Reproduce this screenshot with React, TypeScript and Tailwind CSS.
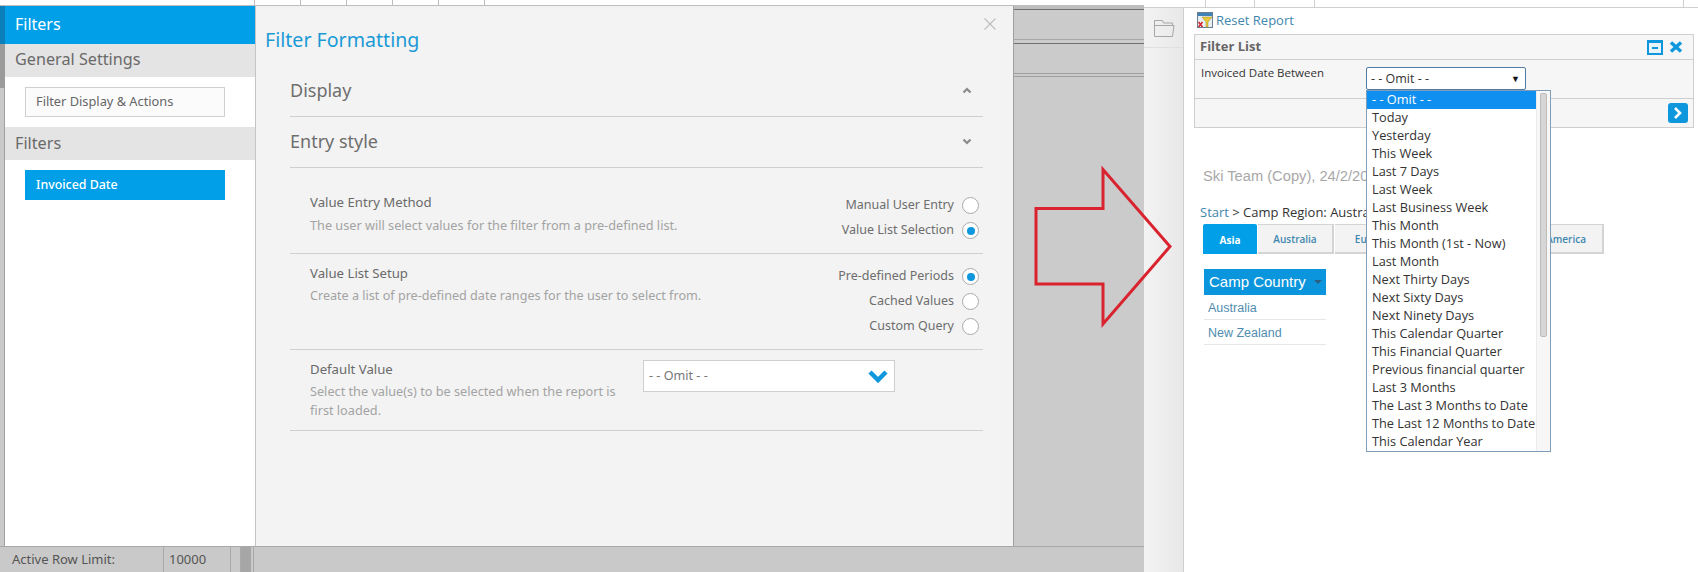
const ticksLeft = [138, 46, 46, 46, 46, 46]

const periods = [
  '- - Omit - -',
  'Today',
  'Yesterday',
  'This Week',
  'Last 7 Days',
  'Last Week',
  'Last Business Week',
  'This Month',
  'This Month (1st - Now)',
  'Last Month',
  'Next Thirty Days',
  'Next Sixty Days',
  'Next Ninety Days',
  'This Calendar Quarter',
  'This Financial Quarter',
  'Previous financial quarter',
  'Last 3 Months',
  'The Last 3 Months to Date',
  'The Last 12 Months to Date',
  'This Calendar Year',
]

function Radio({ label, checked = false }: { label: string; checked?: boolean }) {
  return (
    <div className="flex h-[25px] items-center justify-end gap-[8px]">
      <span className="text-[12.5px] text-[#6d6d6d]">{label}</span>
      <span className="flex h-[17px] w-[17px] items-center justify-center rounded-full border border-[#a9a9a9] bg-white">
        {checked && <span className="h-2 w-2 rounded-full bg-[#0e97dc]" />}
      </span>
    </div>
  )
}

function Chevron({ up = false }: { up?: boolean }) {
  return (
    <svg width="10" height="7" viewBox="0 0 10 7" className="text-[#8a8a8a]">
      <path d={up ? 'M1.5 5.5 5 2l3.5 3.5' : 'M1.5 1.5 5 5l3.5-3.5'} fill="none" stroke="currentColor" strokeWidth="2.2" />
    </svg>
  )
}

function Sidebar() {
  return (
    <div className="flex w-[255px] shrink-0">
      <div className="flex w-[5px] shrink-0 flex-col">
        <div className="h-[38px] bg-[#0b7fb9]" />
        <div className="h-[44px] bg-[#9b9b9b]" />
        <div className="flex-1 border-r border-[#a0a0a0] bg-[#c9c9c9]" />
      </div>
      <div className="flex-1 bg-white">
        <div className="flex h-[38px] items-center bg-[#009fe8] pb-[2px] pl-[10px] text-base text-white">Filters</div>
        <div className="flex h-[33px] items-center bg-[#e4e4e4] pb-[2px] pl-[10px] text-[16.2px] text-[#6a6a6a]">General Settings</div>
        <div className="px-[20px] py-[10px]">
          <div className="flex h-[30px] w-[200px] items-center border border-[#cfcfcf] bg-[#fbfbfb] pl-[10px] text-[12.8px] text-[#666]">
            Filter Display &amp; Actions
          </div>
        </div>
        <div className="flex h-[33px] items-center bg-[#e4e4e4] pl-[10px] text-[16.2px] text-[#6a6a6a]">Filters</div>
        <div className="px-[20px] py-[10px]">
          <div className="flex h-[30px] w-[200px] items-center bg-[#009fe8] pl-[11px] text-[12.4px] font-medium text-white">
            Invoiced Date
          </div>
        </div>
      </div>
    </div>
  )
}

function Modal() {
  return (
    <div className="w-[758px] shrink-0 border-l border-[#c4c4c4] bg-[#f3f3f3]">
      <div className="flex h-[61px] items-start justify-between pl-[9px] pr-[17px]">
        <div className="pt-[20px] text-[19.6px] leading-7 text-[#1b9ad6]">Filter Formatting</div>
        <svg width="12" height="12" viewBox="0 0 12 12" className="mt-[12px] text-[#bdbdbd]">
          <path d="M.5.5l11 11M11.5.5l-11 11" stroke="currentColor" strokeWidth="1.1" />
        </svg>
      </div>

      <div className="ml-[34px] mr-[30px]">
        <div className="flex h-[50px] items-center justify-between border-b border-[#cfcfcf] pb-[2px] pr-[11px] text-[18px] text-[#6e6e6e]">
          Display
          <Chevron up />
        </div>
        <div className="flex h-[51px] items-center justify-between border-b border-[#cfcfcf] pb-[2px] pr-[11px] text-[18px] text-[#6e6e6e]">
          Entry style
          <Chevron />
        </div>

        <div className="flex h-[85px] justify-between pl-[20px] pt-[24px]">
          <div>
            <div className="text-[13.2px] leading-5 text-[#6a6a6a]">Value Entry Method</div>
            <div className="mt-[3px] text-[12.7px] leading-5 text-[#a3a3a3]">
              The user will select values for the filter from a pre-defined list.
            </div>
          </div>
          <div className="-mt-[1px] pr-[4px] pt-[2px]">
            <Radio label="Manual User Entry" />
            <Radio label="Value List Selection" checked />
          </div>
        </div>
        <div className="flex h-[96px] justify-between border-t border-[#cfcfcf] pl-[20px] pt-[9px]">
          <div>
            <div className="text-[13.2px] leading-5 text-[#6a6a6a]">Value List Setup</div>
            <div className="mt-[3px] text-[12.6px] leading-5 text-[#a3a3a3]">
              Create a list of pre-defined date ranges for the user to select from.
            </div>
          </div>
          <div className="pr-[4px] pt-[1px]">
            <Radio label="Pre-defined Periods" checked />
            <Radio label="Cached Values" />
            <Radio label="Custom Query" />
          </div>
        </div>
        <div className="flex h-[81px] border-t border-[#cfcfcf] pl-[20px] pt-[9px]">
          <div className="w-[333px]">
            <div className="text-[13.2px] leading-5 text-[#6a6a6a]">Default Value</div>
            <div className="mt-[3px] w-[312px] text-[12.7px] leading-[19px] text-[#a3a3a3]">
              Select the value(s) to be selected when the report is first loaded.
            </div>
          </div>
          <div className="mt-[1px] flex h-[32px] w-[252px] items-center justify-between border border-[#cfcfcf] bg-white pl-[5px] pr-[5px] text-[12.6px] text-[#777]">
            - - Omit - -
            <svg width="22" height="14" viewBox="0 0 22 14" className="text-[#0e97dc]">
              <path d="M3 3l8 8 8-8" fill="none" stroke="currentColor" strokeWidth="4.5" />
            </svg>
          </div>
        </div>
        <div className="border-t border-[#cfcfcf]" />
      </div>
    </div>
  )
}

function GrayColumn() {
  return (
    <div className="w-[131px] flex-1 border-l border-[#a0a0a0] bg-[#cbcbcb]">
      <div className="h-[3px] bg-[#bdbdbd]" />
      <div className="h-[1px] bg-[#6f6f6f]" />
      <div className="h-[29px]" />
      <div className="h-[1px] bg-[#a8a8a8]" />
      <div className="h-[3px]" />
      <div className="h-[1px] bg-[#6f6f6f]" />
      <div className="h-[29px]" />
      <div className="h-[1px] bg-[#9f9f9f]" />
      <div className="h-[2px]" />
      <div className="h-[1px] bg-[#9f9f9f]" />
    </div>
  )
}

function BottomBar() {
  return (
    <div className="flex h-[26px] shrink-0 border-t border-[#a9a9a9] bg-[#c9c9c9] text-[13px] text-[#555]">
      <div className="flex w-[164px] items-center border-r border-[#a9a9a9] pl-[12px]">Active Row Limit:</div>
      <div className="flex w-[67px] items-center border-r border-[#a9a9a9] pl-[5px]">10000</div>
      <div className="w-[10px] border-r border-[#a9a9a9]" />
      <div className="w-[10px] bg-[#a6a6a6]" />
      <div className="w-[3px] border-r border-[#a9a9a9]" />
    </div>
  )
}

function ReportRail() {
  return (
    <div className="mt-[8px] w-[40px] shrink-0 border-r border-[#cfcfcf] bg-gradient-to-r from-[#f3f3f3] to-[#e8e8e8]">
      <div className="flex h-[40px] items-start justify-center border-b border-[#e0e0e0] pt-[11px]">
        <svg width="22" height="19" viewBox="0 0 22 19" fill="none" stroke="#a6a6a6" strokeWidth="1">
          <path d="M1.5 17.5V1.5h8l1 2.5h9V6" />
          <path d="M1.5 6.5h19.5l-1.5 11H1.5" />
        </svg>
      </div>
    </div>
  )
}

function ResetIcon() {
  return (
    <svg width="16" height="16" viewBox="0 0 16 16">
      <rect x=".5" y=".5" width="15" height="15" fill="#e9eef3" stroke="#6b7f93" />
      <rect x="1" y="1" width="14" height="3" fill="#3f82b8" />
      <path d="M5 5h10l-4 5v5H9v-5z" fill="#e6c83a" stroke="#a38d1c" strokeWidth=".5" />
      <path d="M1.5 10l4 5M5.5 10l-4 5" stroke="#d2232a" strokeWidth="1.5" />
    </svg>
  )
}

function DatePopup() {
  return (
    <div className="absolute left-0 top-[23px] z-10 flex h-[362px] w-[185px] border border-[#7f9db9] bg-white">
      <div className="w-[169px] text-[12.75px] leading-[16px] text-[#333]">
        {periods.map((p, i) => (
          <div key={p} className={i === 0 ? 'h-[18px] bg-[#0f8ff0] pl-[5px] text-white' : 'h-[18px] pl-[5px]'}>
            {p}
          </div>
        ))}
      </div>
      <div className="flex-1 border-l border-[#ececec] bg-[#f7f7f7] px-[3px] pt-[2px]">
        <div className="h-[244px] rounded-[2px] border border-[#bdbdbd] bg-[#d6d6d6]" />
      </div>
    </div>
  )
}

function FilterList() {
  return (
    <div className="ml-[10px] mr-[4px] border border-[#cfcfcf] bg-[#f6f6f6] [font-family:'Open_Sans',sans-serif]">
      <div className="flex h-[25px] items-center justify-between border-b border-[#cfcfcf] pl-[5px] pr-[10px]">
        <span className="text-[13px] font-bold text-[#666]">Filter List</span>
        <div className="flex items-center gap-[6px]">
          <span className="flex h-[15px] w-[16px] items-center justify-center border-[2px] border-t-[3px] border-[#0e97dc] bg-[#e8f4fb]">
            <span className="h-[2px] w-[6px] bg-[#0e97dc]" />
          </span>
          <svg width="14" height="12" viewBox="0 0 14 12">
            <path d="M2 1.5l10 9M12 1.5l-10 9" stroke="#0e97dc" strokeWidth="3.4" />
          </svg>
        </div>
      </div>
      <div className="flex h-[39px] border-b border-[#cfcfcf]">
        <div className="w-[171px] pl-[6px] pt-[4px] text-[11.5px] leading-[18px] text-[#333]">Invoiced Date Between</div>
        <div className="relative mt-[7px] h-[23px] w-[160px]">
          <div className="flex h-full items-center justify-between rounded-[2px] border border-[#4f7ba6] bg-white pl-[4px] pr-[5px] pt-[1px] text-[12.5px] text-[#333]">
            - - Omit - -
            <span className="text-[9px] text-[#111]">▼</span>
          </div>
          <DatePopup />
        </div>
      </div>
      <div className="flex h-[28px] items-center justify-end pr-[5px]">
        <span className="flex h-[20px] w-[20px] items-center justify-center rounded-[3px] bg-[#0e97dc]">
          <svg width="10" height="14" viewBox="0 0 10 14">
            <path d="M2 2l5 5-5 5" fill="none" stroke="#fff" strokeWidth="2.6" />
          </svg>
        </span>
      </div>
    </div>
  )
}

function ReportPane() {
  return (
    <div className="flex-1">
      <div className="flex h-[30px] items-end pl-[13px]">
        <div className="flex items-center gap-[3px]">
          <ResetIcon />
          <span className="text-[13px] text-[#3f87ad] [font-family:'Open_Sans',sans-serif]">Reset Report</span>
        </div>
      </div>
      <div className="h-[4px]" />
      <FilterList />

      <div className="ml-[19px] mt-[37px] text-[14.7px] leading-[22px] text-[#a8a8a8] [font-family:'Liberation_Sans',sans-serif]">
        Ski Team (Copy), 24/2/2015
      </div>
      <div className="ml-[16px] mt-[15px] text-[13px] leading-[20px] text-[#333] [font-family:'Open_Sans',sans-serif]">
        <span className="text-[#3f87ad]">Start</span> &gt; Camp Region: Australia
      </div>

      <div className="ml-[19px] mt-[2px] flex h-[30px] w-[401px] gap-[1px] text-[10px] font-semibold text-[#3f87ad] [font-family:'Open_Sans',sans-serif]">
        <div className="flex w-[54px] items-center justify-center rounded-t-[2px] bg-[#009fe8] pt-[2px] font-bold text-white">Asia</div>
        <div className="flex w-[76px] items-center justify-center border border-b-2 border-l-0 border-r-2 border-[#d4d4d4] bg-[#f3f3f3] pt-[2px]">Australia</div>
        <div className="flex w-[76px] items-center justify-center border border-b-2 border-l-0 border-r-2 border-[#d4d4d4] bg-[#f3f3f3] pt-[2px]">Europe</div>
        <div className="flex flex-1 items-center justify-end border border-b-2 border-l-0 border-r-2 border-[#d4d4d4] bg-[#f3f3f3] pr-[16px] pt-[2px]">North America</div>
      </div>

      <div className="ml-[20px] mt-[15px] w-[122px] [font-family:'Liberation_Sans',sans-serif]">
        <div className="flex h-[26px] items-center justify-between bg-[#0b95dc] pl-[5px] pr-[4px] text-[15px] text-white">
          Camp Country
          <span className="h-0 w-0 border-x-[4px] border-t-[4px] border-x-transparent border-t-[#2a5f80]" />
        </div>
        {['Australia', 'New Zealand'].map((c) => (
          <div key={c} className="flex h-[25px] items-center border-b border-[#e6e6e6] pl-[4px] pt-[2px] text-[12.5px] text-[#4f8db0]">
            {c}
          </div>
        ))}
      </div>
    </div>
  )
}

export default function App() {
  return (
    <div className="relative flex h-[572px] w-[1698px] overflow-hidden bg-white [font-family:'Noto_Sans',sans-serif]">
      <div className="flex w-[1144px] shrink-0 flex-col">
        <div className="flex h-[6px] shrink-0 border-b border-[#bdbdbd] bg-white pl-[117px]">
          {ticksLeft.map((w, i) => (
            <div key={i} className="h-full border-r border-[#bdbdbd]" style={{ width: w }} />
          ))}
        </div>
        <div className="flex min-h-0 flex-1">
          <Sidebar />
          <Modal />
          <GrayColumn />
        </div>
        <BottomBar />
      </div>

      <div className="flex flex-1 flex-col">
        <div className="relative flex flex-1">
          <div className="absolute left-0 right-0 top-0 flex h-[8px] border-b border-[#cfcfcf]">
            <div className="w-[62px] border-r border-[#cfcfcf]" />
            <div className="w-[49px] border-r border-[#cfcfcf]" />
            <div className="w-[60px] border-r border-[#cfcfcf]" />
            <div className="w-[369px] border-r border-[#cfcfcf]" />
          </div>
          <ReportRail />
          <ReportPane />
        </div>
      </div>

      {/* annotation arrow drawn over the screenshot */}
      <svg className="absolute left-[1030px] top-[164px]" width="146" height="166" viewBox="0 0 146 166" fill="none">
        <path d="M6 44.5h67V5.5L140 82.5 73 160V120H6z" stroke="#d9232e" strokeWidth="3" />
      </svg>
    </div>
  )
}
